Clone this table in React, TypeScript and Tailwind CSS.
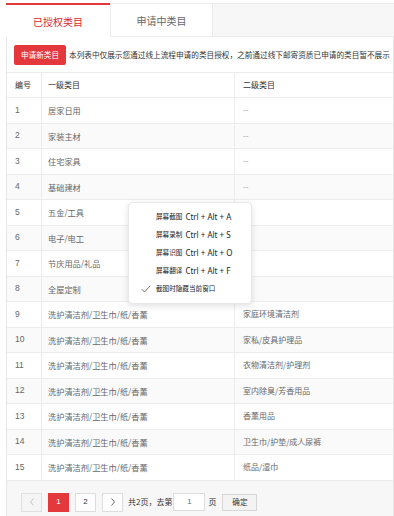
import React from "react";

const rows: [number, string, string][] = [
  [1, "居家日用", "--"],
  [2, "家装主材", "--"],
  [3, "住宅家具", "--"],
  [4, "基础建材", "--"],
  [5, "五金/工具", ""],
  [6, "电子/电工", ""],
  [7, "节庆用品/礼品", ""],
  [8, "全屋定制", ""],
  [9, "洗护清洁剂/卫生巾/纸/香薰", "家庭环境清洁剂"],
  [10, "洗护清洁剂/卫生巾/纸/香薰", "家私/皮具护理品"],
  [11, "洗护清洁剂/卫生巾/纸/香薰", "衣物清洁剂/护理剂"],
  [12, "洗护清洁剂/卫生巾/纸/香薰", "室内除臭/芳香用品"],
  [13, "洗护清洁剂/卫生巾/纸/香薰", "香薰用品"],
  [14, "洗护清洁剂/卫生巾/纸/香薰", "卫生巾/护垫/成人尿裤"],
  [15, "洗护清洁剂/卫生巾/纸/香薰", "纸品/湿巾"],
];

const menu = [
  ["屏幕截图", "Ctrl + Alt + A"],
  ["屏幕录制", "Ctrl + Alt + S"],
  ["屏幕识图", "Ctrl + Alt + O"],
  ["屏幕翻译", "Ctrl + Alt + F"],
];

export default function App() {
  return (
    <div className="relative w-[394px] h-[516px] overflow-hidden bg-white pt-[3px] pl-[6px] flex flex-col font-['Noto_Sans_CJK_SC',sans-serif]">
      {/* tabs */}
      <div className="flex h-[34px] shrink-0">
        <div className="w-[104px] border-t-[2px] border-[#e4393c] bg-white flex items-center justify-center text-[10px] text-[#d9282f]">
          已授权类目
        </div>
        <div className="w-[103px] border-t border-x border-b border-[#ececec] bg-white flex items-center justify-center text-[10px] text-[#666]">
          申请中类目
        </div>
        <div className="flex-1 bg-[#f7f7f7] border-t border-b border-[#ececec]" />
      </div>

      {/* panel */}
      <div className="flex-1 flex flex-col border-x border-[#e6e6e6]">
        <div className="h-[35px] shrink-0 flex items-center pl-[7px]">
          <div className="w-[52px] h-[20px] bg-[#e4393c] rounded-[2px] text-white text-[7.6px] flex items-center justify-center">
            申请新类目
          </div>
          <span className="ml-[3px] text-[7.65px] text-[#333] whitespace-nowrap">
            本列表中仅展示您通过线上流程申请的类目授权，之前通过线下邮寄资质已申请的类目暂不展示
          </span>
        </div>

        {/* table */}
        <div className="border-t border-[#ececec] text-[8px]">
          <div className="flex h-[25px] border-b border-[#ececec] text-[#333]">
            <div className="w-[34px] flex items-center pl-[8px]">编号</div>
            <div className="w-[193px] flex items-center pl-[6px] border-l border-[#ececec]">一级类目</div>
            <div className="flex-1 flex items-center pl-[8px] border-l border-[#ececec]">二级类目</div>
          </div>
          {rows.map(([n, a, b], i) => (
            <div
              key={n}
              className={`flex h-[25.5px] border-b border-[#ececec] text-[#666] ${i % 2 === 1 ? "bg-[#fafafa]" : "bg-white"}`}
            >
              <div className="w-[34px] flex items-center pl-[8px] text-[8.5px] font-['Liberation_Sans',sans-serif]">{n}</div>
              <div className="w-[193px] flex items-center pl-[6px] border-l border-[#ececec] text-[8.2px]">{a}</div>
              <div className={`flex-1 flex items-center pl-[8px] border-l border-[#ececec] ${b === "--" ? "text-[#999]" : ""}`}>
                {b}
              </div>
            </div>
          ))}
        </div>

        {/* pagination */}
        <div className="flex-1 bg-[#f7f7f7] flex items-start pt-[12px] pl-[14px] text-[8px] text-[#333]">
          <div className="w-[21px] h-[19px] border border-[#e0e0e0] bg-[#f5f5f5] flex items-center justify-center text-[#bbb]">
            <svg width="6" height="8" viewBox="0 0 6 8" fill="none" stroke="currentColor" strokeWidth="0.9">
              <path d="M4.5 0.5L1.5 4l3 3.5" />
            </svg>
          </div>
          <div className="ml-[6px] w-[21px] h-[19px] bg-[#e4393c] text-white flex items-center justify-center font-['Liberation_Sans',sans-serif]">
            1
          </div>
          <div className="ml-[6px] w-[21px] h-[19px] border border-[#ddd] bg-white flex items-center justify-center font-['Liberation_Sans',sans-serif]">
            2
          </div>
          <div className="ml-[6px] w-[21px] h-[19px] border border-[#ddd] bg-white flex items-center justify-center text-[#555]">
            <svg width="6" height="8" viewBox="0 0 6 8" fill="none" stroke="currentColor" strokeWidth="0.9">
              <path d="M1.5 0.5L4.5 4l-3 3.5" />
            </svg>
          </div>
          <span className="ml-[5px] h-[19px] flex items-center">共2页，去第</span>
          <div className="ml-[1px] w-[32px] h-[18px] border border-[#ddd] bg-white flex items-center justify-center text-[#666] font-['Liberation_Sans',sans-serif]">
            1
          </div>
          <span className="ml-[3px] h-[19px] flex items-center">页</span>
          <div className="ml-[6px] mt-[1px] w-[35px] h-[17px] border border-[#d6d6d6] bg-[#f3f3f3] flex items-center justify-center text-[7.6px]">
            确定
          </div>
        </div>
      </div>

      {/* context menu */}
      <div className="absolute left-[128px] top-[202px] w-[124px] h-[102px] bg-white rounded-[4px] border border-[#e8e8e8] shadow-[0_2px_6px_rgba(0,0,0,0.12)] py-[5px] text-[#222]">
        {menu.map(([a, b]) => (
          <div key={a} className="h-[18px] flex items-center pl-[27px] whitespace-nowrap">
            <span className="text-[6.6px]">{a}</span>
            <span className="ml-[3px] text-[8px] font-['Noto_Sans',sans-serif]">{b}</span>
          </div>
        ))}
        <div className="h-[18px] flex items-center pl-[12px] whitespace-nowrap">
          <svg width="10" height="8" viewBox="0 0 10 8" fill="none" stroke="#555" strokeWidth="0.8">
            <path d="M0.8 4.2L3.5 7 9.2 0.8" />
          </svg>
          <span className="ml-[5px] text-[6.6px]">截图时隐藏当前窗口</span>
        </div>
      </div>
    </div>
  );
}
